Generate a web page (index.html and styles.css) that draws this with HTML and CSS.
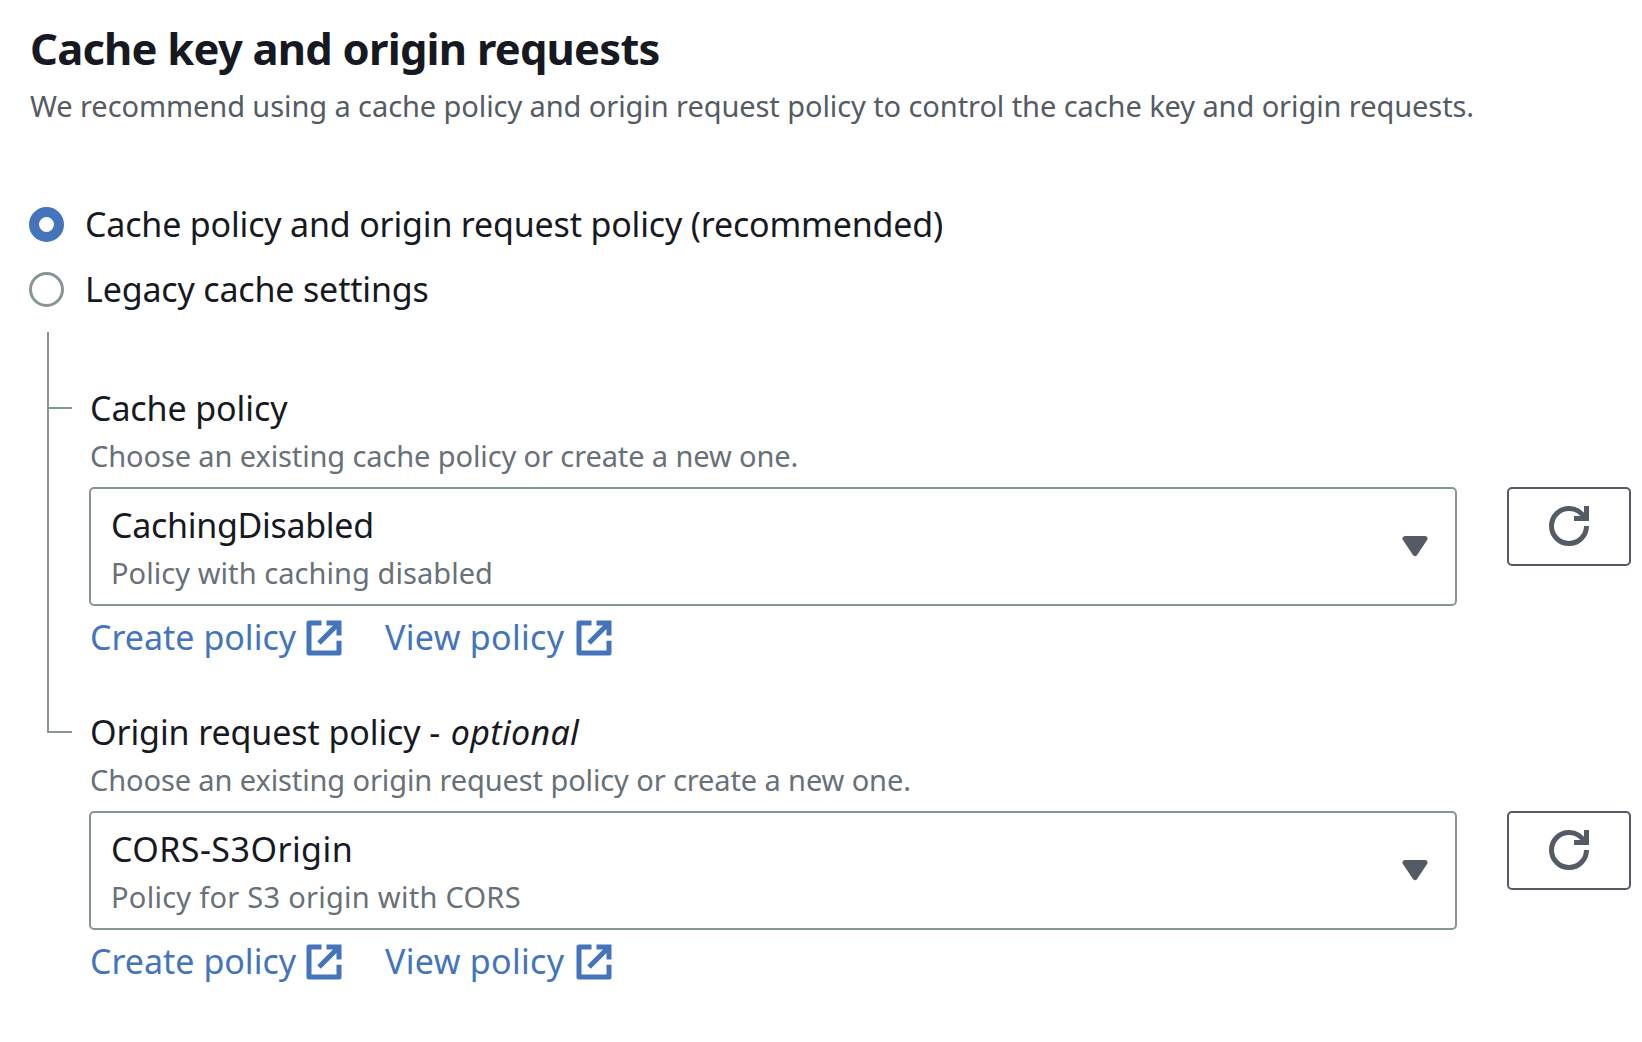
FILE: index.html
```html
<!DOCTYPE html>
<html lang="en">
<head>
<meta charset="utf-8">
<title>Cache key and origin requests</title>
<link rel="stylesheet" href="styles.css">
</head>
<body>
<svg class="sprite" aria-hidden="true">
  <symbol id="external" viewBox="0 0 16 16">
    <path d="M9 2h5v5M6 10l7.7-7.7"/>
    <path stroke-linejoin="round" d="M14 9.05V14H2V2h5"/>
  </symbol>
  <symbol id="refresh" viewBox="0 0 16 16">
    <path d="M10 5h5V0"/>
    <path d="M15 8a7 7 0 1 1-7-7 6.87 6.87 0 0 1 6.3 4"/>
  </symbol>
  <symbol id="caret" viewBox="0 0 16 16">
    <path stroke-linejoin="round" d="M4 5h8l-4 6-4-6z"/>
  </symbol>
</svg>
<main class="panel">
  <h1 class="title">Cache key and origin requests</h1>
  <p class="description">We recommend using a cache policy and origin request policy to control the cache key and origin requests.</p>

  <div class="options">
    <label class="option"><span class="radio radio-checked"></span><span class="option-text option-long">Cache policy and origin request policy (recommended)</span></label>
    <label class="option"><span class="radio"></span><span class="option-text">Legacy cache settings</span></label>
  </div>

  <div class="tree">
    <div class="rail"><span class="branch branch-first"></span><span class="branch branch-second"></span></div>
    <div class="fields">
      <section class="field">
        <h2 class="label">Cache policy</h2>
        <p class="hint">Choose an existing cache policy or create a new one.</p>
        <div class="control">
          <div class="select">
            <div>
              <div class="value value-caching">CachingDisabled</div>
              <div class="detail detail-caching">Policy with caching disabled</div>
            </div>
            <svg class="icon caret"><use href="#caret"/></svg>
          </div>
          <button class="refresh" aria-label="Refresh"><svg class="icon"><use href="#refresh"/></svg></button>
        </div>
        <div class="links">
          <a class="link">Create policy<svg class="icon"><use href="#external"/></svg></a>
          <a class="link link-view">View policy<svg class="icon"><use href="#external"/></svg></a>
        </div>
      </section>
      <section class="field">
        <h2 class="label">Origin request policy - <em class="optional">optional</em></h2>
        <p class="hint">Choose an existing origin request policy or create a new one.</p>
        <div class="control">
          <div class="select">
            <div>
              <div class="value value-cors">CORS-S3Origin</div>
              <div class="detail detail-cors">Policy for S3 origin with CORS</div>
            </div>
            <svg class="icon caret"><use href="#caret"/></svg>
          </div>
          <button class="refresh" aria-label="Refresh"><svg class="icon"><use href="#refresh"/></svg></button>
        </div>
        <div class="links">
          <a class="link">Create policy<svg class="icon"><use href="#external"/></svg></a>
          <a class="link link-view">View policy<svg class="icon"><use href="#external"/></svg></a>
        </div>
      </section>
    </div>
  </div>
</main>
</body>
</html>
```

FILE: styles.css
```css
* { box-sizing: border-box; }
body {
  margin: 0;
  background: #fff;
  color: #16191f;
  font: 34px/44px "Noto Sans", sans-serif;
  white-space: nowrap;
  overflow: hidden;
}
h1, h2, p { margin: 0; font-weight: 400; }
.sprite { display: none; }
.panel { padding: 20px 11px 0 29px; }
.title {
  padding-left: 1px;
  font-size: 43.5px;
  font-weight: 700;
  line-height: 56px;
  letter-spacing: -0.77px;
}
.description {
  margin-top: 11px;
  padding-left: 1px;
  color: #545b64;
  font-size: 29px;
  line-height: 38px;
  letter-spacing: -0.08px;
}

.options { margin-top: 67px; }
.option {
  display: flex;
  align-items: center;
  gap: 21px;
  height: 65px;
}
.option-text { padding-bottom: 2px; letter-spacing: -0.17px; }
.option-long { letter-spacing: -0.18px; }
.radio {
  width: 35px;
  height: 35px;
  border: 3px solid #879596;
  border-radius: 50%;
}
.radio-checked { border: 10px solid #4474bb; }

.tree { display: flex; margin-top: 10px; }
.rail {
  display: flex;
  flex-direction: column;
  width: 43px;
  padding-left: 18px;
}
.branch {
  width: 25px;
  border-left: 2px solid #879596;
  border-bottom: 2px solid #879596;
}
.branch-first { height: 77px; }
.branch-second { height: 324px; }
.fields { flex: 1; padding: 54px 0 0 17px; }
.field { height: 324px; }
.label {
  padding-left: 1px;
  font-size: 34px;
  letter-spacing: -0.1px;
}
.optional { margin-left: 2px; letter-spacing: 0.3px; }
.hint {
  margin-top: 7px;
  padding-left: 1px;
  color: #687078;
  font-size: 29px;
  line-height: 38px;
  letter-spacing: -0.11px;
}
.control {
  display: flex;
  align-items: flex-start;
  gap: 50px;
  margin-top: 12px;
}
.select {
  display: flex;
  flex: 1;
  justify-content: space-between;
  height: 119px;
  padding: 14px 20px 0;
  border: 2px solid #879596;
  border-radius: 5px;
}
.value-caching { letter-spacing: -0.3px; }
.value-cors { letter-spacing: 0.45px; }
.detail {
  margin-top: 7px;
  color: #687078;
  font-size: 29px;
  line-height: 38px;
}
.detail-caching { letter-spacing: 0.06px; }
.detail-cors { letter-spacing: 0.27px; }
.refresh {
  display: flex;
  align-items: flex-start;
  justify-content: center;
  width: 124px;
  height: 79px;
  padding: 17px 0 0;
  background: #fff;
  border: 2px solid #545b64;
  border-radius: 5px;
  color: #545b64;
}
.icon {
  flex: none;
  width: 40px;
  height: 40px;
  fill: none;
  stroke: currentColor;
  stroke-width: 2;
}
.caret {
  margin-top: 23px;
  color: #545b64;
  fill: currentColor;
}
.links {
  display: flex;
  gap: 41px;
  margin-top: 9px;
  padding-left: 1px;
  color: #4474bb;
}
.link { display: flex; gap: 8px; }
.link .icon { margin-top: 3px; }
.link-view { gap: 10px; letter-spacing: 0.3px; }
```
